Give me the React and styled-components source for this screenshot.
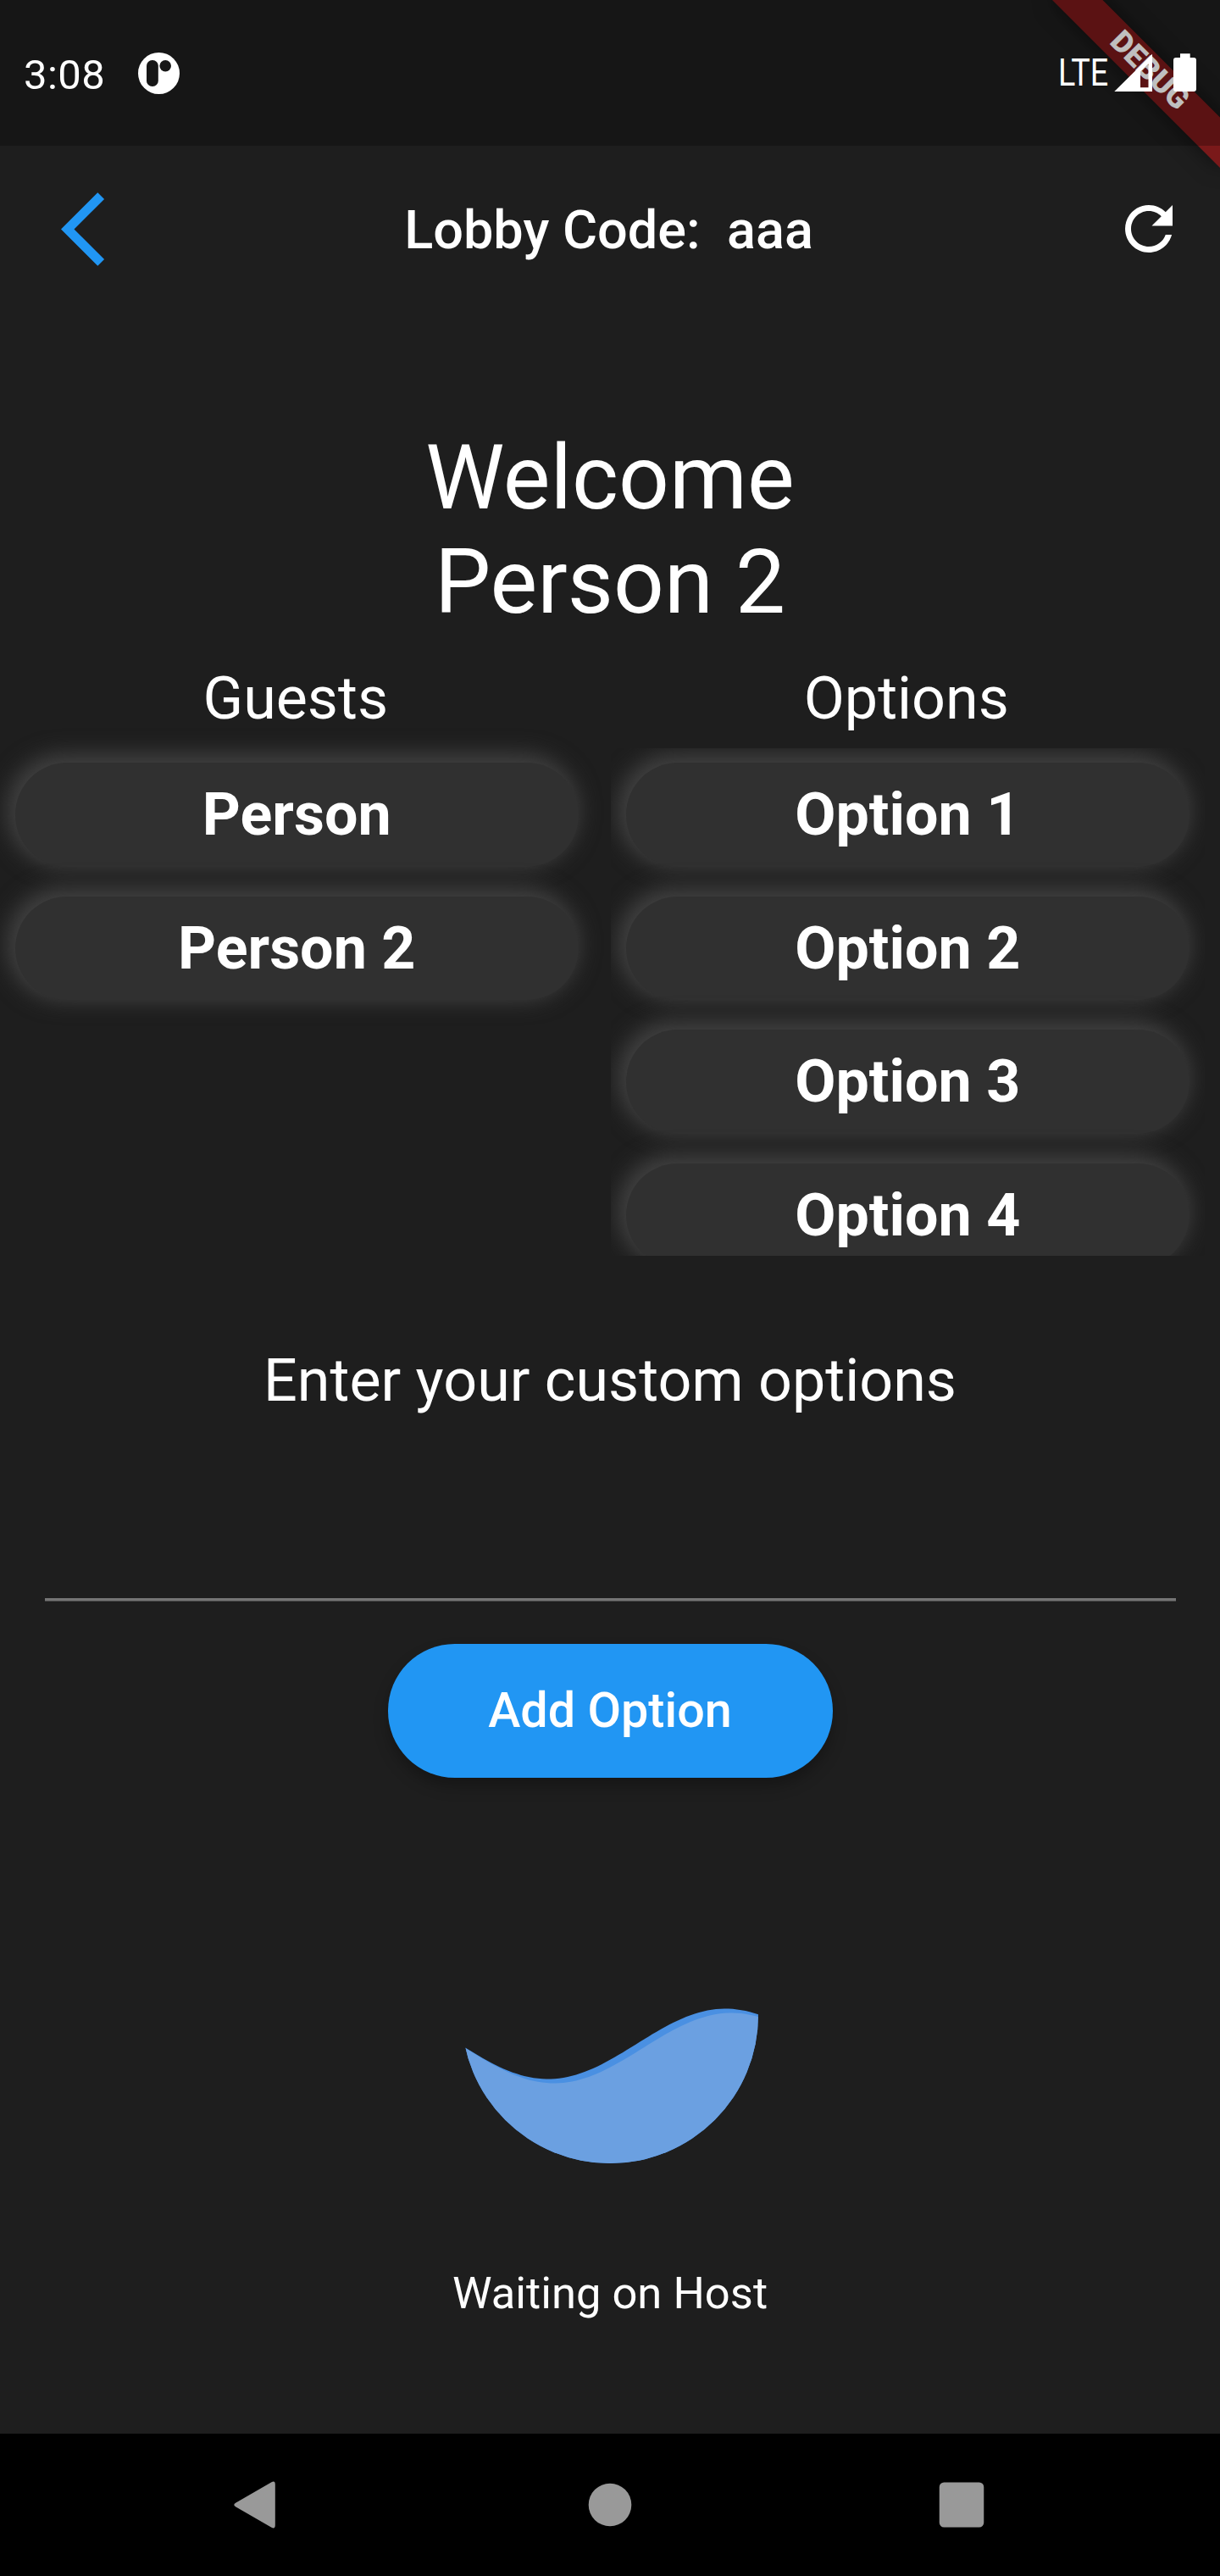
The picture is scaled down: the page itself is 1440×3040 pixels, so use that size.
import React, { useState } from "react";
import styled, { createGlobalStyle } from "styled-components";

const GlobalStyle = createGlobalStyle`
  *, *::before, *::after { box-sizing: border-box; }
  body {
    margin: 0;
    background: #1e1e1e;
    color: #fff;
    font-family: Roboto, "Noto Sans", sans-serif;
  }
`;

const Screen = styled.div`
  position: relative;
  display: flex;
  flex-direction: column;
  width: 1440px;
  height: 3040px;
  overflow: hidden;
  background: #1e1e1e;
`;

const BannerCorner = styled.div`
  position: absolute;
  top: 0;
  right: 0;
  width: 260px;
  height: 260px;
  overflow: hidden;
  pointer-events: none;
`;

const Banner = styled.div`
  position: absolute;
  top: 0;
  left: 260px;
  width: 280px;
  height: 42px;
  transform-origin: 0 0;
  transform: rotate(45deg) translate(-140px, 98px);
  background: #7a191a;
  box-shadow: 0 0 25px rgba(0, 0, 0, 0.5);
  font-size: 35.7px;
  font-weight: 900;
  line-height: 38.4px;
  text-align: center;
`;

const StatusBar = styled.header`
  position: relative;
  z-index: 1;
  flex: none;
  display: flex;
  justify-content: space-between;
  height: 172px;
  padding: 60px 28px 0;
  background: rgba(0, 0, 0, 0.25);
`;

const StatusGroup = styled.div`
  display: flex;
  align-items: flex-start;
`;

const Clock = styled.span`
  width: 135px;
  font-size: 49px;
  line-height: 57px;
  letter-spacing: 0.4px;
`;

const NetworkLabel = styled.span`
  width: 66.5px;
  font-size: 44px;
  line-height: 52px;
  transform: scaleX(0.857);
  transform-origin: 0 0;
`;

const AppBar = styled.div`
  flex: none;
  display: flex;
  align-items: center;
  justify-content: space-between;
  height: 196px;
  padding: 0 42px 0 72px;
`;

const AppTitle = styled.h1`
  margin: 0;
  padding: 3px 1.5px 0 0;
  font-size: 63px;
  font-weight: 500;
  line-height: 74px;
  white-space: pre;
`;

const IconButton = styled.button`
  display: flex;
  padding: 0;
  border: 0;
  background: none;
  color: ${(p) => p.$color};
`;

const Body = styled.main`
  flex: 1;
  display: flex;
  flex-direction: column;
  align-items: center;
`;

const Welcome = styled.h2`
  margin: 134.5px 0 0;
  font-size: 105px;
  font-weight: 400;
  line-height: 123px;
  text-align: center;
`;

const Columns = styled.section`
  display: flex;
  align-self: stretch;
  gap: 20.5px;
  margin-top: 34.5px;
`;

const Column = styled.div`
  display: flex;
  flex-direction: column;
  gap: 17.5px;
  width: 700.5px;
`;

const Heading = styled.h3`
  margin: 0;
  padding-right: 3px;
  font-size: 70px;
  font-weight: 400;
  line-height: 82px;
  text-align: center;
`;

const List = styled.ul`
  display: flex;
  flex-direction: column;
  gap: 35px;
  height: 599.5px;
  margin: 0;
  padding: 17.5px;
  list-style: none;
  overflow: ${(p) => (p.$scrolls ? "hidden" : "visible")};
`;

const Pill = styled.li`
  flex: none;
  height: 122.5px;
  border-radius: 61.25px;
  background: #303030;
  box-shadow: -5px -5px 26px 5px #424242;
  font-size: 70px;
  font-weight: 700;
  line-height: 122.5px;
  text-align: center;
`;

const Prompt = styled.label`
  margin-top: 106px;
  font-size: 70px;
  line-height: 82px;
`;

const OptionInput = styled.input`
  width: 1335px;
  height: 219px;
  padding: 0;
  border: 0;
  border-bottom: 3px solid #757575;
  border-radius: 0;
  outline: 0;
  background: none;
  box-shadow: 0 1px 0 #4a4a4a;
  color: inherit;
  font: inherit;
  font-size: 56px;
`;

const AddButton = styled.button`
  width: 525px;
  height: 157.5px;
  margin-top: 51px;
  padding: 0;
  border: 0;
  border-radius: 78.75px;
  background: #2196f3;
  box-shadow: 0 10px 17px rgba(0, 0, 0, 0.27);
  color: #fff;
  font: inherit;
  font-size: 57.5px;
  font-weight: 500;
`;

const WaveLoader = styled.svg`
  display: block;
  margin-top: 105px;
`;

const Waiting = styled.p`
  margin: 122.5px 0 0;
  font-size: 52.5px;
  line-height: 62px;
`;

const NavBar = styled.nav`
  flex: none;
  display: flex;
  align-items: center;
  justify-content: center;
  gap: 330.75px;
  height: 168px;
  background: #000;
`;

const NotificationSvg = styled.svg`
  margin-top: 2px;
`;

const SignalSvg = styled.svg`
  margin: 3px 25px 0 0;
`;

const BatterySvg = styled.svg`
  margin-top: 3px;
`;

const wavePath = (trough, middle) => {
  const points = [];
  for (let x = 0; x <= 350; x += 5) {
    const y = middle + 41.5 * Math.cos(((x - trough) / 419) * 2 * Math.PI);
    points.push(`${x},${y.toFixed(2)}`);
  }
  return `M${points.join("L")}L350,350L0,350Z`;
};

const guests = ["Person", "Person 2"];
const options = ["Option 1", "Option 2", "Option 3", "Option 4"];

function PillColumn({ title, items, scrolls }) {
  return (
    <Column>
      <Heading>{title}</Heading>
      <List $scrolls={scrolls}>
        {items.map((item) => (
          <Pill key={item}>{item}</Pill>
        ))}
      </List>
    </Column>
  );
}

function NotificationIcon() {
  return (
    <NotificationSvg width="49" height="49" viewBox="0 0 49 49">
      <circle cx="24.5" cy="24.5" r="24.5" fill="#fff" />
      <rect x="10" y="9" width="13.8" height="31" rx="6.6" fill="#171717" />
      <circle cx="32.2" cy="15.8" r="6.8" fill="#171717" />
    </NotificationSvg>
  );
}

function SignalIcon() {
  return (
    <SignalSvg width="45" height="45" viewBox="0 0 45 45">
      <path fill="#fff" fillRule="evenodd" d="M0.3 45H45V.7ZM31 21.5V40.2H40.5V12Z" />
    </SignalSvg>
  );
}

function BatteryIcon() {
  return (
    <BatterySvg width="27" height="45" viewBox="0 0 27 45">
      <path
        fill="#fff"
        d="M8 .3H19.7V5H24a3 3 0 0 1 3 3V42a3 3 0 0 1-3 3H3a3 3 0 0 1-3-3V8a3 3 0 0 1 3-3H8Z"
      />
    </BatterySvg>
  );
}

export default function App() {
  const [draft, setDraft] = useState("");

  return (
    <Screen>
      <GlobalStyle />
      <BannerCorner>
        <Banner>DEBUG</Banner>
      </BannerCorner>

      <StatusBar>
        <StatusGroup>
          <Clock>3:08</Clock>
          <NotificationIcon />
        </StatusGroup>
        <StatusGroup>
          <NetworkLabel>LTE</NetworkLabel>
          <SignalIcon />
          <BatteryIcon />
        </StatusGroup>
      </StatusBar>

      <AppBar>
        <IconButton $color="#2196f3" aria-label="Back">
          <svg width="52.5" height="105" viewBox="0 0 12 24" fill="currentColor">
            <path d="M11.67 3.87 9.9 2.1 0 12l9.9 9.9 1.77-1.77L3.54 12z" />
          </svg>
        </IconButton>
        <AppTitle>{"Lobby Code:  aaa"}</AppTitle>
        <IconButton $color="#fff" aria-label="Refresh">
          <svg width="84" height="84" viewBox="0 0 24 24" fill="currentColor">
            <path d="M17.65 6.35C16.2 4.9 14.21 4 12 4c-4.42 0-7.99 3.58-7.99 8s3.57 8 7.99 8c3.73 0 6.84-2.55 7.73-6h-2.08c-.82 2.33-3.04 4-5.65 4-3.31 0-6-2.69-6-6s2.69-6 6-6c1.66 0 3.14.69 4.22 1.78L13 11h7V4l-2.35 2.35z" />
          </svg>
        </IconButton>
      </AppBar>

      <Body>
        <Welcome>
          Welcome
          <br />
          Person 2
        </Welcome>

        <Columns>
          <PillColumn title="Guests" items={guests} />
          <PillColumn title="Options" items={options} scrolls />
        </Columns>

        <Prompt htmlFor="custom-option">Enter your custom options</Prompt>
        <OptionInput
          id="custom-option"
          value={draft}
          onChange={(e) => setDraft(e.target.value)}
        />
        <AddButton>Add Option</AddButton>

        <WaveLoader width="350" height="350" viewBox="0 0 350 350">
          <clipPath id="bowl">
            <circle cx="175" cy="175" r="175" />
          </clipPath>
          <g clipPath="url(#bowl)">
            <path d={wavePath(101.7, 209)} fill="#4a90e2" />
            <path d={wavePath(109, 214)} fill="#6ba0e1" />
          </g>
        </WaveLoader>
        <Waiting>Waiting on Host</Waiting>
      </Body>

      <NavBar>
        <svg width="84" height="84" viewBox="0 0 84 84" fill="#999">
          <path d="M61.8 66V18Q61.8 13 57.5 15.2L15.5 39.5Q11 42 15.5 44.5L57.5 68.8Q61.8 71 61.8 66Z" />
        </svg>
        <svg width="84" height="84" viewBox="0 0 84 84" fill="#999">
          <circle cx="42" cy="42" r="25.3" />
        </svg>
        <svg width="84" height="84" viewBox="0 0 84 84" fill="#999">
          <rect x="15.75" y="15.5" width="52.5" height="53" rx="5.5" />
        </svg>
      </NavBar>
    </Screen>
  );
}
